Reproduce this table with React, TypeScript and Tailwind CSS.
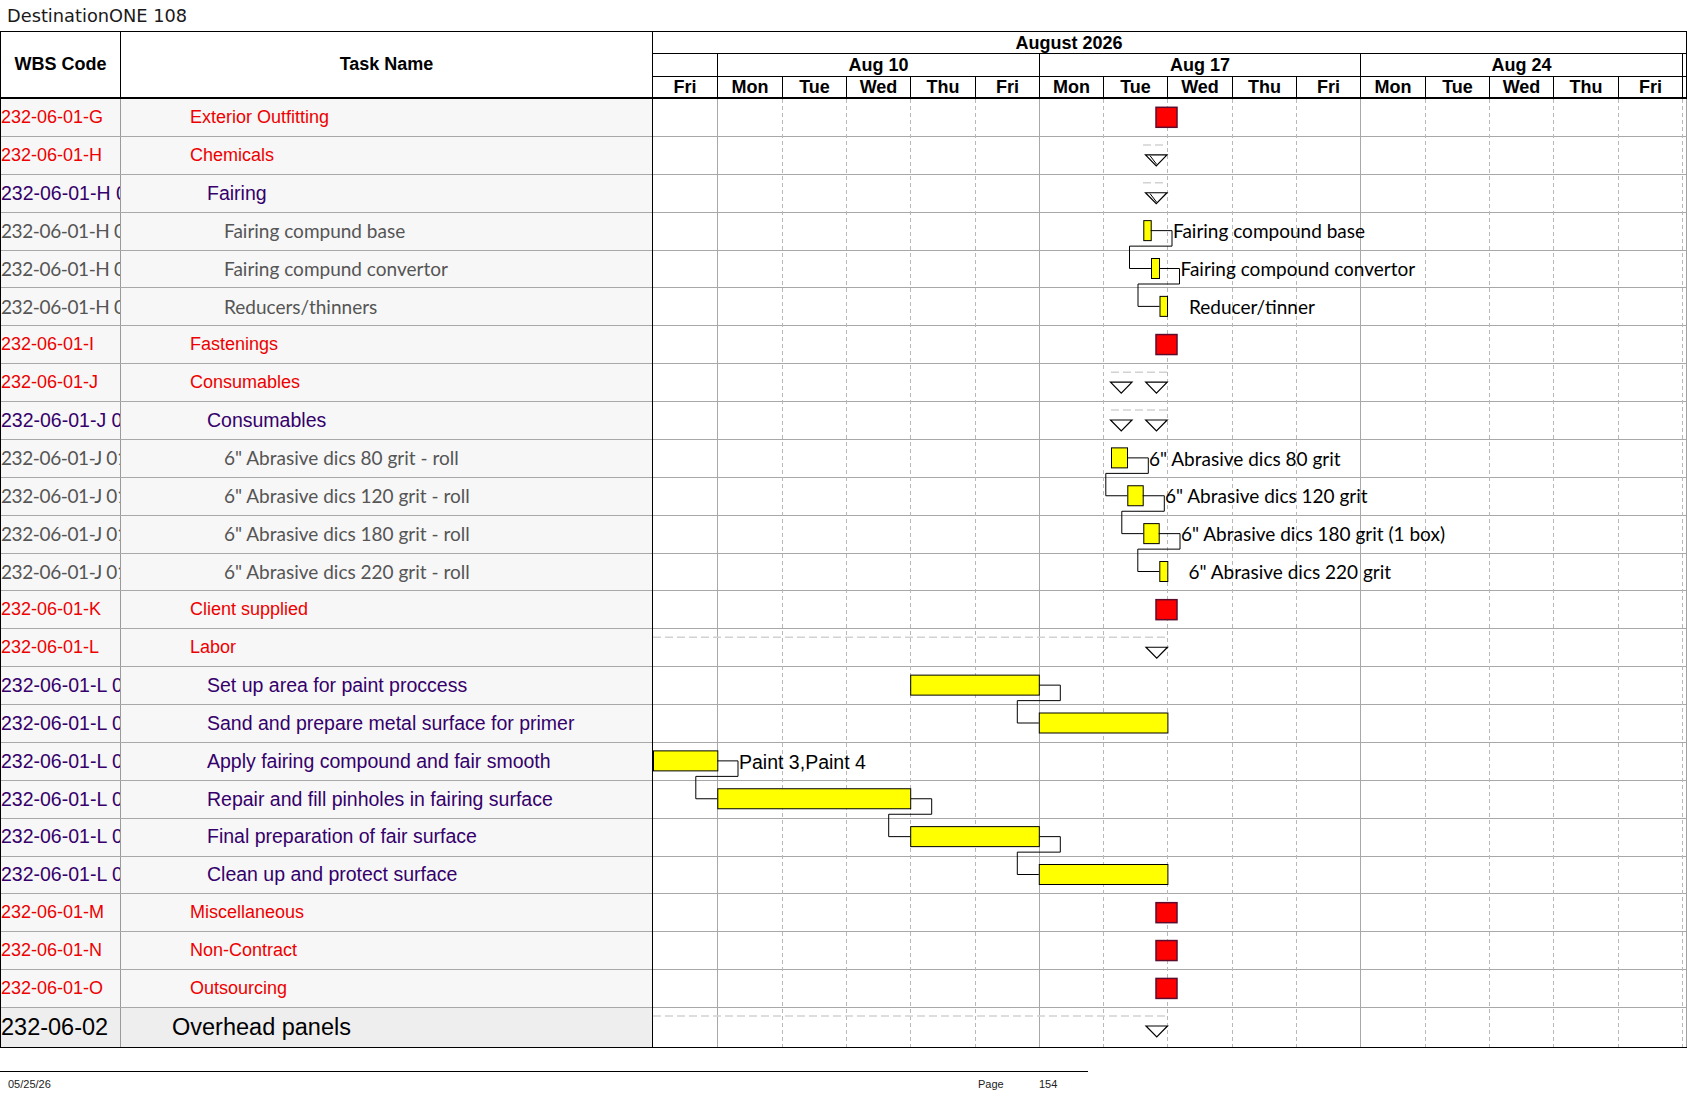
import React from 'react';

type Level = 'red' | 'purple' | 'gray' | 'top';

const rows: { wbs: string; name: string; level: Level }[] = [
  { wbs: '232-06-01-G', name: 'Exterior Outfitting', level: 'red' },
  { wbs: '232-06-01-H', name: 'Chemicals', level: 'red' },
  { wbs: '232-06-01-H 01', name: 'Fairing', level: 'purple' },
  { wbs: '232-06-01-H 01.01', name: 'Fairing compund base', level: 'gray' },
  { wbs: '232-06-01-H 01.02', name: 'Fairing compund convertor', level: 'gray' },
  { wbs: '232-06-01-H 01.03', name: 'Reducers/thinners', level: 'gray' },
  { wbs: '232-06-01-I', name: 'Fastenings', level: 'red' },
  { wbs: '232-06-01-J', name: 'Consumables', level: 'red' },
  { wbs: '232-06-01-J 01', name: 'Consumables', level: 'purple' },
  { wbs: '232-06-01-J 01.01', name: '6" Abrasive dics 80 grit - roll', level: 'gray' },
  { wbs: '232-06-01-J 01.02', name: '6" Abrasive dics 120 grit - roll', level: 'gray' },
  { wbs: '232-06-01-J 01.03', name: '6" Abrasive dics 180 grit - roll', level: 'gray' },
  { wbs: '232-06-01-J 01.04', name: '6" Abrasive dics 220 grit - roll', level: 'gray' },
  { wbs: '232-06-01-K', name: 'Client supplied', level: 'red' },
  { wbs: '232-06-01-L', name: 'Labor', level: 'red' },
  { wbs: '232-06-01-L 01', name: 'Set up area for paint proccess', level: 'purple' },
  { wbs: '232-06-01-L 02', name: 'Sand and prepare metal surface for primer', level: 'purple' },
  { wbs: '232-06-01-L 03', name: 'Apply fairing compound and fair smooth', level: 'purple' },
  { wbs: '232-06-01-L 04', name: 'Repair and fill pinholes in fairing surface', level: 'purple' },
  { wbs: '232-06-01-L 05', name: 'Final preparation of fair surface', level: 'purple' },
  { wbs: '232-06-01-L 06', name: 'Clean up and protect surface', level: 'purple' },
  { wbs: '232-06-01-M', name: 'Miscellaneous', level: 'red' },
  { wbs: '232-06-01-N', name: 'Non-Contract', level: 'red' },
  { wbs: '232-06-01-O', name: 'Outsourcing', level: 'red' },
  { wbs: '232-06-02', name: 'Overhead panels', level: 'top' },
];

const textStyle: Record<Level, string> = {
  red: "font-['Liberation_Sans',Arial,sans-serif] text-[18px] text-[#ee0000]",
  purple: "font-['Liberation_Sans',Arial,sans-serif] text-[19.5px] text-[#35006b]",
  gray: "font-['Lato',sans-serif] text-[19px] text-[#555555]",
  top: "font-['Liberation_Sans',Arial,sans-serif] text-[23.5px] text-black",
};

// the WBS column uses a slightly tighter set for the calibri-like rows
const wbsExtra: Record<Level, string> = {
  red: '',
  purple: '',
  gray: 'text-[18px] tracking-[-0.4px]',
  top: '',
};

const indent: Record<Level, string> = {
  red: 'pl-[69px]',
  purple: 'pl-[86px]',
  gray: 'pl-[103px]',
  top: 'pl-[51px]',
};

const days = [
  { d: 'Fri', w: 'w-[65px]' },
  { d: 'Mon', w: 'w-[65px]' },
  { d: 'Tue', w: 'w-[64px]' },
  { d: 'Wed', w: 'w-[64px]' },
  { d: 'Thu', w: 'w-[65px]' },
  { d: 'Fri', w: 'w-[64px]' },
  { d: 'Mon', w: 'w-[64px]' },
  { d: 'Tue', w: 'w-[64px]' },
  { d: 'Wed', w: 'w-[65px]' },
  { d: 'Thu', w: 'w-[64px]' },
  { d: 'Fri', w: 'w-[64px]' },
  { d: 'Mon', w: 'w-[65px]' },
  { d: 'Tue', w: 'w-[64px]' },
  { d: 'Wed', w: 'w-[64px]' },
  { d: 'Thu', w: 'w-[65px]' },
  { d: 'Fri', w: 'w-[64px]' },
];

// chart geometry
const RH = 37.875;
const DW = 64.3;
const rowTop = (k: number) => RH * k;

const milestones = [0, 6, 13, 21, 22, 23];

const summaries = [
  { row: 1, dash: [490, 514], tris: [492.5], dbl: true },
  { row: 2, dash: [490, 514], tris: [492.5], dbl: true },
  { row: 7, dash: [458, 514], tris: [457.5, 492.7], dbl: false },
  { row: 8, dash: [458, 514], tris: [457.5, 492.7], dbl: false },
  { row: 14, dash: [0, 514], tris: [493], dbl: false },
  { row: 24, dash: [0, 514], tris: [493], dbl: false },
];

type Bar = { row: number; x1: number; x2: number; end?: number; label?: string; lx?: number; arial?: boolean };

const bars: Bar[] = [
  { row: 3, x1: 490.3, x2: 497.7, end: 519, label: 'Fairing compound base', lx: 520 },
  { row: 4, x1: 498, x2: 506, end: 526.5, label: 'Fairing compound convertor', lx: 527.5 },
  { row: 5, x1: 506.5, x2: 514, label: 'Reducer/tinner', lx: 536 },
  { row: 9, x1: 458, x2: 474, end: 495.3, label: '6" Abrasive dics 80 grit', lx: 496 },
  { row: 10, x1: 474.3, x2: 489.7, end: 511.3, label: '6" Abrasive dics 120 grit', lx: 512 },
  { row: 11, x1: 490.3, x2: 505.7, end: 527, label: '6" Abrasive dics 180 grit (1 box)', lx: 528 },
  { row: 12, x1: 506.3, x2: 514.3, label: '6" Abrasive dics 220 grit', lx: 535.5 },
  { row: 15, x1: 257.2, x2: 385.8 },
  { row: 16, x1: 385.8, x2: 514.4 },
  { row: 17, x1: 0, x2: 64.3, end: 85, label: 'Paint 3,Paint 4', lx: 86, arial: true },
  { row: 18, x1: 64.3, x2: 257.2 },
  { row: 19, x1: 257.2, x2: 385.8 },
  { row: 20, x1: 385.8, x2: 514.4 },
];

const links = [
  [3, 4], [4, 5], [9, 10], [10, 11], [11, 12], [15, 16], [17, 18], [18, 19], [19, 20],
];

const barOf = (row: number) => bars.find((b) => b.row === row)!;

const GanttChart = () => {
  const lines = Array.from({ length: 16 }, (_, i) => i + 1);
  return (
    <svg width={1034} height={948} className="block shrink-0">
      {/* row lines */}
      {Array.from({ length: 24 }, (_, k) => (
        <line key={'h' + k} x1={0} x2={1034} y1={Math.round(RH * (k + 1)) - 0.5} y2={Math.round(RH * (k + 1)) - 0.5} stroke="#a8a8a8" strokeWidth={1} />
      ))}
      {/* day lines */}
      {lines.map((i) => {
        const x = Math.round(DW * i) + 0.5;
        const solid = i === 1 || i === 6 || i === 11;
        return (
          <line key={'v' + i} x1={x} x2={x} y1={0} y2={948} stroke={solid ? '#a8a8a8' : '#b8b8b8'} strokeWidth={1} strokeDasharray={solid ? undefined : '4 3'} />
        );
      })}
      <line x1={1033.5} x2={1033.5} y1={0} y2={948} stroke="#a0a0a0" strokeWidth={1} />

      {/* summary rollups */}
      {summaries.map((s) => {
        const t = rowTop(s.row);
        return (
          <g key={'s' + s.row}>
            <line x1={s.dash[0]} x2={s.dash[1]} y1={t + 8} y2={t + 8} stroke="#d2d2d2" strokeWidth={1.5} strokeDasharray="8 4" />
            {s.tris.map((x) => (
              <g key={x}>
                <polygon points={`${x},${t + 18} ${x + 21.5},${t + 18} ${x + 10.75},${t + 29}`} fill="white" stroke="black" strokeWidth={1.2} />
                {s.dbl && <line x1={x + 4.5} y1={t + 18.8} x2={x + 11.2} y2={t + 27.5} stroke="black" strokeWidth={1} />}
              </g>
            ))}
          </g>
        );
      })}

      {/* milestones */}
      {milestones.map((k) => (
        <rect key={'m' + k} x={503} y={rowTop(k) + 8.3} width={21} height={20} fill="#ff0000" stroke="#5e0b2c" strokeWidth={1.5} />
      ))}

      {/* links */}
      {links.map(([a, b]) => {
        const A = barOf(a);
        const B = barOf(b);
        const ta = rowTop(a);
        const tb = rowTop(b);
        const sx = A.end ?? A.x2 + 21.5;
        const start = A.end ? `M${sx},${ta + 18}` : `M${A.x2},${ta + 18} H${sx}`;
        const d = `${start} V${ta + 33.5} H${B.x1 - 21.5} V${tb + 18} H${B.x1}`;
        return <path key={'l' + a} d={d} fill="none" stroke="black" strokeWidth={1} />;
      })}

      {/* bars */}
      {bars.map((b) => {
        const t = rowTop(b.row);
        return (
          <g key={'b' + b.row}>
            <rect x={b.x1 + 0.5} y={t + 8} width={b.x2 - b.x1} height={20} fill="#ffff00" stroke="black" strokeWidth={1} />
            {b.end && <line x1={b.x2} x2={b.end} y1={t + 18} y2={t + 18} stroke="black" strokeWidth={1} />}
            {b.label && (
              <text
                x={b.lx}
                y={t + 25.7}
                fill="black"
                className={b.arial ? "font-['Liberation_Sans',Arial,sans-serif] text-[19.5px]" : "font-['Lato',sans-serif] text-[19px]"}
              >
                {b.label}
              </text>
            )}
          </g>
        );
      })}
    </svg>
  );
};

const App = () => {
  const head = "font-['Liberation_Sans',Arial,sans-serif] font-bold text-[18px] text-black";
  return (
    <div className="w-[1687px] h-[1097px] bg-white overflow-hidden">
      <div className="h-[31px] pl-[7px] leading-[31px] font-['DejaVu_Sans',sans-serif] text-[17.8px] text-[#1a1a1a]">
        DestinationONE 108
      </div>

      <div className="w-[1687px] border-t border-black">
        {/* header */}
        <div className="flex h-[67px] border-l border-b-2 border-black">
          <div className={`w-[120px] border-r border-black flex items-center justify-center ${head}`}>WBS Code</div>
          <div className={`w-[532px] border-r border-black flex items-center justify-center ${head}`}>Task Name</div>
          <div className={`w-[1034px] flex flex-col ${head}`}>
            <div className="h-[22px] border-b border-r border-black flex items-center">
              <span className="w-[832px] text-center leading-none">August 2026</span>
            </div>
            <div className="h-[23px] border-b border-black flex">
              <div className="w-[65px] border-r border-black" />
              <div className="w-[322px] border-r border-black flex items-center justify-center">Aug 10</div>
              <div className="w-[321px] border-r border-black flex items-center justify-center">Aug 17</div>
              <div className="w-[322px] border-r border-black flex items-center justify-center">Aug 24</div>
              <div className="flex-1 border-r border-black" />
            </div>
            <div className="h-[20px] flex">
              {days.map((d, i) => (
                <div key={i} className={`${d.w} border-r border-black flex items-center justify-center leading-none`}>
                  {d.d}
                </div>
              ))}
              <div className="flex-1 border-r border-black" />
            </div>
          </div>
        </div>

        {/* body */}
        <div className="flex border-b border-black">
          <div className="w-[653px] shrink-0 border-l border-r border-black">
            {rows.map((r, k) => {
              const last = k === rows.length - 1;
              return (
                <div
                  key={k}
                  className={`flex ${last ? 'h-[39px] bg-[#eeeeee]' : 'h-[37.875px] border-b border-[#a8a8a8] bg-[#f7f7f7]'}`}
                >
                  <div className={`w-[120px] shrink-0 border-r border-[#9a9a9a] flex items-center overflow-hidden whitespace-nowrap ${textStyle[r.level]} ${wbsExtra[r.level]}`}>
                    {r.wbs}
                  </div>
                  <div className={`flex-1 flex items-center overflow-hidden whitespace-nowrap ${indent[r.level]} ${textStyle[r.level]}`}>
                    {r.name}
                  </div>
                </div>
              );
            })}
          </div>
          <GanttChart />
        </div>

        {/* footer */}
        <div className="mt-[23px] w-[1088px] border-t border-black pt-[7px] flex font-['Liberation_Sans',Arial,sans-serif] text-[11px] leading-[11px] text-[#222]">
          <span className="pl-[8px] w-[978px]">05/25/26</span>
          <span className="w-[61px]">Page</span>
          <span>154</span>
        </div>
      </div>
    </div>
  );
};

export default App;
